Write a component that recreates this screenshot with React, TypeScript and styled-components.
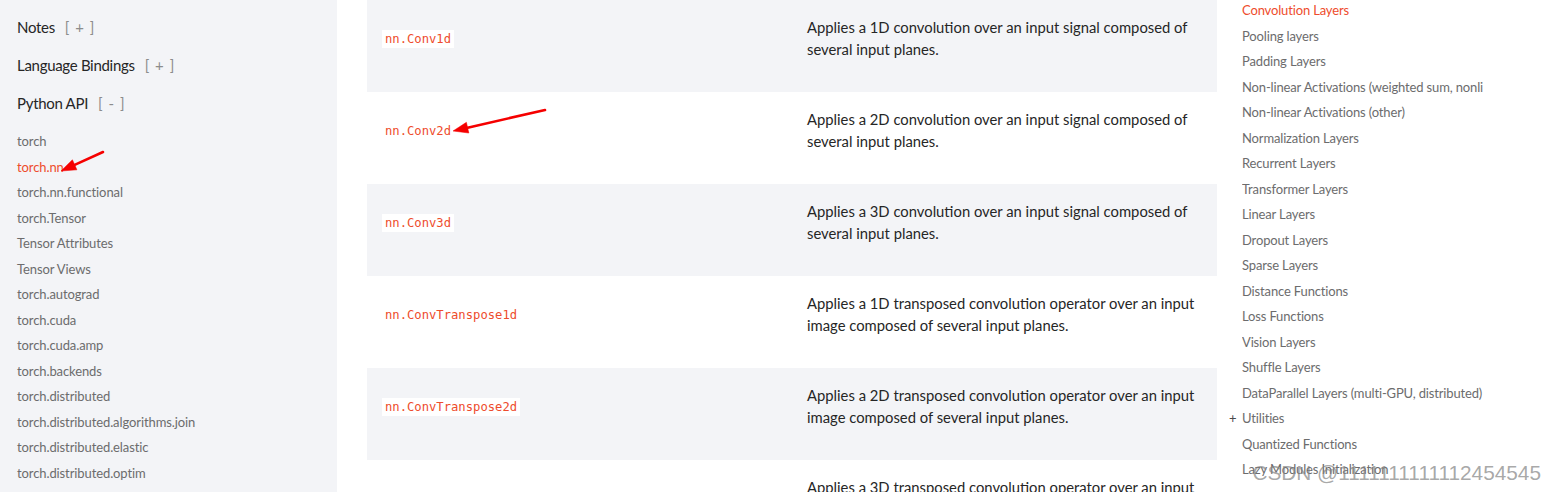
import React from "react";
import styled, { createGlobalStyle } from "styled-components";

const GlobalStyle = createGlobalStyle`
  html, body {
    margin: 0;
    padding: 0;
    background: #ffffff;
    overflow: hidden;
  }
  * {
    box-sizing: border-box;
  }
`;

const sans = `Lato, "Open Sans", "Liberation Sans", sans-serif`;
const mono = `"DejaVu Sans Mono", "Liberation Mono", monospace`;

const Page = styled.div`
  position: relative;
  width: 1555px;
  height: 492px;
  display: grid;
  grid-template-columns: 337px 880px 1fr;
  overflow: hidden;
  font-family: ${sans};
`;

const Sidebar = styled.aside`
  background: #f3f4f7;
  padding: 8px 0 0 17px;
  height: 100%;
`;

const Heading = styled.div`
  font-size: 15px;
  line-height: 38px;
  letter-spacing: -0.3px;
  color: #262626;
  white-space: nowrap;
`;

const Toggle = styled.span`
  margin-left: 10px;
  color: #8c8c8c;
  letter-spacing: 1px;
`;

const SideList = styled.ul`
  list-style: none;
  margin: 7px 0 0;
  padding: 0;
`;

const SideItem = styled.li<{ active?: boolean }>`
  font-size: 13px;
  line-height: 25.5px;
  letter-spacing: -0.1px;
  color: ${(p) => (p.active ? "#ee4c2c" : "#6c6c6d")};
  white-space: nowrap;
`;

const Main = styled.main`
  padding-left: 30px;
`;

const Table = styled.div`
  display: flex;
  flex-direction: column;
`;

const Row = styled.div<{ shaded: boolean }>`
  display: grid;
  grid-template-columns: 422px 428px;
  height: 92px;
  background: ${(p) => (p.shaded ? "#f3f4f7" : "#ffffff")};
`;

const CodeCell = styled.div`
  padding: 27px 0 0 15px;
`;

const Code = styled.code`
  display: inline-block;
  background: #ffffff;
  color: #ee4c2c;
  font-family: ${mono};
  font-size: 12.2px;
  line-height: 18px;
  padding: 0 3px;
`;

const DescCell = styled.div`
  padding: 16px 8px 0 18px;
  font-size: 14.8px;
  line-height: 22px;
  color: #262626;
`;

const RightNav = styled.nav`
  padding-left: 25px;
`;

const NavList = styled.ul`
  list-style: none;
  margin: -2px 0 0;
  padding: 0;
  width: 241px;
`;

const NavItem = styled.li<{ active?: boolean; expandable?: boolean }>`
  position: relative;
  font-size: 13px;
  line-height: 25.5px;
  letter-spacing: -0.15px;
  color: ${(p) => (p.active ? "#ee4c2c" : "#6c6c6d")};
  white-space: nowrap;
  overflow: ${(p) => (p.expandable ? "visible" : "hidden")};

  &::before {
    content: ${(p) => (p.expandable ? '"+"' : "none")};
    position: absolute;
    left: -13px;
    color: #4a4a4a;
  }
`;

const Overlay = styled.svg`
  position: absolute;
  inset: 0;
  pointer-events: none;
`;

const Watermark = styled.div`
  position: absolute;
  right: 14px;
  bottom: 7px;
  font-family: "Liberation Sans", Arial, sans-serif;
  font-size: 20.8px;
  color: rgba(130, 130, 130, 0.7);
  white-space: nowrap;
`;

const headings = [
  { label: "Notes", sign: "+" },
  { label: "Language Bindings", sign: "+" },
  { label: "Python API", sign: "-" },
];

const sideItems = [
  "torch",
  "torch.nn",
  "torch.nn.functional",
  "torch.Tensor",
  "Tensor Attributes",
  "Tensor Views",
  "torch.autograd",
  "torch.cuda",
  "torch.cuda.amp",
  "torch.backends",
  "torch.distributed",
  "torch.distributed.algorithms.join",
  "torch.distributed.elastic",
  "torch.distributed.optim",
];

const rows = [
  { code: "nn.Conv1d", desc: "Applies a 1D convolution over an input signal composed of several input planes." },
  { code: "nn.Conv2d", desc: "Applies a 2D convolution over an input signal composed of several input planes." },
  { code: "nn.Conv3d", desc: "Applies a 3D convolution over an input signal composed of several input planes." },
  { code: "nn.ConvTranspose1d", desc: "Applies a 1D transposed convolution operator over an input image composed of several input planes." },
  { code: "nn.ConvTranspose2d", desc: "Applies a 2D transposed convolution operator over an input image composed of several input planes." },
  { code: "nn.ConvTranspose3d", desc: "Applies a 3D transposed convolution operator over an input image composed of several input planes." },
];

const navItems = [
  "Convolution Layers",
  "Pooling layers",
  "Padding Layers",
  "Non-linear Activations (weighted sum, nonlinearity)",
  "Non-linear Activations (other)",
  "Normalization Layers",
  "Recurrent Layers",
  "Transformer Layers",
  "Linear Layers",
  "Dropout Layers",
  "Sparse Layers",
  "Distance Functions",
  "Loss Functions",
  "Vision Layers",
  "Shuffle Layers",
  "DataParallel Layers (multi-GPU, distributed)",
  "Utilities",
  "Quantized Functions",
  "Lazy Modules Initialization",
];

type Pt = [number, number];

const Arrow = ({ from, to }: { from: Pt; to: Pt }) => {
  const dx = to[0] - from[0];
  const dy = to[1] - from[1];
  const len = Math.hypot(dx, dy);
  const ux = dx / len;
  const uy = dy / len;
  const bx = to[0] - ux * 15;
  const by = to[1] - uy * 15;
  const w = 5.5;
  const pts = `${to[0]},${to[1]} ${bx - uy * w},${by + ux * w} ${bx + uy * w},${by - ux * w}`;
  return (
    <g fill="#f50000" stroke="#f50000">
      <line x1={from[0]} y1={from[1]} x2={bx} y2={by} strokeWidth={2.6} strokeLinecap="round" />
      <polygon points={pts} strokeWidth={0.5} />
    </g>
  );
};

export default function App() {
  return (
    <>
      <GlobalStyle />
      <Page>
        <Sidebar>
          {headings.map((h) => (
            <Heading key={h.label}>
              {h.label}
              <Toggle>[ {h.sign} ]</Toggle>
            </Heading>
          ))}
          <SideList>
            {sideItems.map((s) => (
              <SideItem key={s} active={s === "torch.nn"}>
                {s}
              </SideItem>
            ))}
          </SideList>
        </Sidebar>

        <Main>
          <Table>
            {rows.map((r, i) => (
              <Row key={r.code} shaded={i % 2 === 0}>
                <CodeCell>
                  <Code>{r.code}</Code>
                </CodeCell>
                <DescCell>{r.desc}</DescCell>
              </Row>
            ))}
          </Table>
        </Main>

        <RightNav>
          <NavList>
            {navItems.map((n) => (
              <NavItem key={n} active={n === "Convolution Layers"} expandable={n === "Utilities"}>
                {n}
              </NavItem>
            ))}
          </NavList>
        </RightNav>

        <Overlay width={1555} height={492} viewBox="0 0 1555 492">
          <Arrow from={[103, 152]} to={[61, 171]} />
          <Arrow from={[545, 110]} to={[453, 131]} />
        </Overlay>
        <Watermark>CSDN @1111111111112454545</Watermark>
      </Page>
    </>
  );
}
